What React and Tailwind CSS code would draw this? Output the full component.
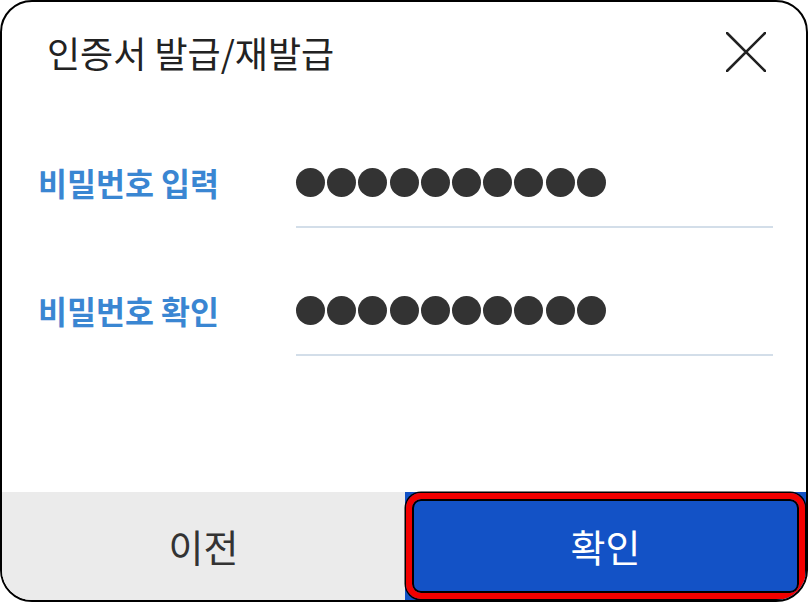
import React from 'react';

const font = { fontFamily: '"Noto Sans CJK KR", "Noto Sans", sans-serif' };

const PasswordDots = ({ count = 10 }) => (
  <div className="flex gap-[2.2px]">
    {Array.from({ length: count }).map((_, i) => (
      <span key={i} className="block w-[29px] h-[29px] rounded-full bg-[#333333]" />
    ))}
  </div>
);

const FieldRow = ({ label }) => (
  <div className="flex items-center">
    <div className="w-[294px] pl-[36px] text-[31.5px] font-bold text-[#3a86d2] leading-none">
      {label}
    </div>
    <div className="w-[477px] h-[90px] flex items-center border-b-2 border-[#d3dee9]">
      <PasswordDots />
    </div>
  </div>
);

const App = () => {
  return (
    <div className="w-[810px] h-[602px] bg-white" style={font}>
      <div className="w-[808px] h-[602px] border-2 border-black rounded-[32px] overflow-hidden flex flex-col bg-white">
        {/* Header */}
        <div className="h-[100px] flex items-center justify-between pl-[45px] pr-[40px]">
          <h1 className="text-[36px] text-[#222222] leading-none">인증서 발급/재발급</h1>
          <button className="w-[40px] h-[40px] flex items-center justify-center">
            <svg width="40" height="40" viewBox="0 0 40 40" fill="none">
              <path d="M1 1L39 39M39 1L1 39" stroke="#222222" strokeWidth="2.6" strokeLinecap="round" />
            </svg>
          </button>
        </div>

        {/* Form */}
        <div className="pt-[36px] flex flex-col gap-[38px]">
          <FieldRow label="비밀번호 입력" />
          <FieldRow label="비밀번호 확인" />
        </div>

        <div className="flex-1" />

        {/* Footer buttons */}
        <div className="h-[108px] flex">
          <button className="w-[403px] h-full bg-[#ebebeb] text-[38px] text-[#333333] leading-none">
            이전
          </button>
          <button className="relative flex-1 h-full bg-[#1352c6] text-[38px] text-white leading-none">
            확인
            <span className="absolute inset-[1px] rounded-[15px] border-[6px] border-[#f20000] shadow-[0_0_0_1.5px_#000,inset_0_0_0_2px_#000]" />
          </button>
        </div>
      </div>
    </div>
  );
};

export default App;
